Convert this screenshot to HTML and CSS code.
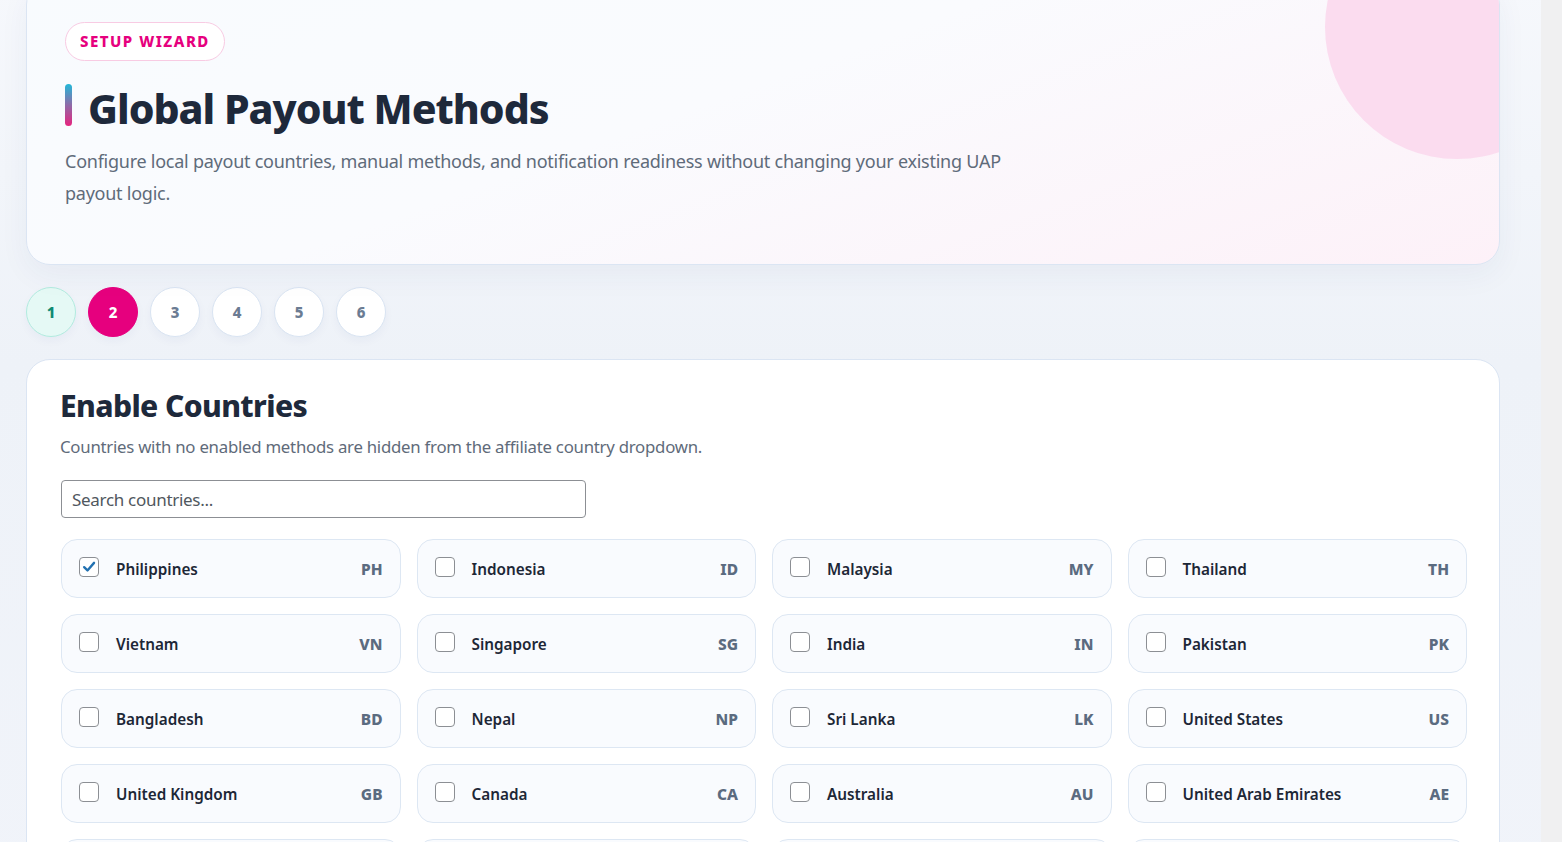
FILE: index.html
```html
<!DOCTYPE html>
<html lang="en">
<head>
<meta charset="utf-8">
<title>Global Payout Methods</title>
<link rel="stylesheet" href="styles.css">
</head>
<body>
<div class="wrap">
  <section class="hero">
    <div class="hero-circle"></div>
    <span class="badge">SETUP WIZARD</span>
    <h1 class="title"><span class="accent"></span>Global Payout Methods</h1>
    <p class="lead">Configure local payout countries, manual methods, and notification readiness without changing your existing UAP payout logic.</p>
  </section>

  <nav class="steps">
    <span class="step done">1</span>
    <span class="step active">2</span>
    <span class="step">3</span>
    <span class="step">4</span>
    <span class="step">5</span>
    <span class="step">6</span>
  </nav>

  <section class="panel">
    <h2 class="panel-title">Enable Countries</h2>
    <p class="panel-sub">Countries with no enabled methods are hidden from the affiliate country dropdown.</p>
    <input class="search" type="text" placeholder="Search countries...">
    <div class="grid">
      <label class="country"><span class="cb checked"><svg viewBox="0 0 20 20" width="20" height="20"><path d="M4.6 10.2 L8.3 13.8 L15.6 5.4" fill="none" stroke="#2271b1" stroke-width="2.6" stroke-linecap="round" stroke-linejoin="round"/></svg></span><span class="name">Philippines</span><span class="code">PH</span></label>
      <label class="country"><span class="cb"></span><span class="name">Indonesia</span><span class="code">ID</span></label>
      <label class="country"><span class="cb"></span><span class="name">Malaysia</span><span class="code">MY</span></label>
      <label class="country"><span class="cb"></span><span class="name">Thailand</span><span class="code">TH</span></label>
      <label class="country"><span class="cb"></span><span class="name">Vietnam</span><span class="code">VN</span></label>
      <label class="country"><span class="cb"></span><span class="name">Singapore</span><span class="code">SG</span></label>
      <label class="country"><span class="cb"></span><span class="name">India</span><span class="code">IN</span></label>
      <label class="country"><span class="cb"></span><span class="name">Pakistan</span><span class="code">PK</span></label>
      <label class="country"><span class="cb"></span><span class="name">Bangladesh</span><span class="code">BD</span></label>
      <label class="country"><span class="cb"></span><span class="name">Nepal</span><span class="code">NP</span></label>
      <label class="country"><span class="cb"></span><span class="name">Sri Lanka</span><span class="code">LK</span></label>
      <label class="country"><span class="cb"></span><span class="name">United States</span><span class="code">US</span></label>
      <label class="country"><span class="cb"></span><span class="name">United Kingdom</span><span class="code">GB</span></label>
      <label class="country"><span class="cb"></span><span class="name">Canada</span><span class="code">CA</span></label>
      <label class="country"><span class="cb"></span><span class="name">Australia</span><span class="code">AU</span></label>
      <label class="country"><span class="cb"></span><span class="name">United Arab Emirates</span><span class="code">AE</span></label>
      <label class="country"><span class="cb"></span><span class="name">Saudi Arabia</span><span class="code">SA</span></label>
      <label class="country"><span class="cb"></span><span class="name">Japan</span><span class="code">JP</span></label>
      <label class="country"><span class="cb"></span><span class="name">South Korea</span><span class="code">KR</span></label>
      <label class="country"><span class="cb"></span><span class="name">Germany</span><span class="code">DE</span></label>
    </div>
  </section>
</div>
</body>
</html>
```

FILE: styles.css
```css
* { box-sizing: border-box; }
html, body { margin: 0; padding: 0; }
body {
  background: #f0f0f1;
  font-family: "Noto Sans", "Open Sans", Arial, sans-serif;
  color: #1e293b;
  overflow: hidden;
  height: 842px;
}
.wrap {
  width: 1541px;
  min-height: 842px;
  padding: 0 41px 0 26px;
  background: linear-gradient(180deg, #f6f8fc 0%, #eef2f8 40%, #f1f4fa 100%);
}
.hero {
  position: relative;
  overflow: hidden;
  margin-top: -19px;
  padding: 40px 38px 55px 38px;
  border: 1px solid #dbe5f3;
  border-radius: 24px;
  background: linear-gradient(160deg, #f8fbfe 0%, #fafbfe 45%, #fdf1f8 100%);
  box-shadow: 0 10px 30px rgba(30, 60, 120, 0.05);
}
.hero-circle {
  position: absolute;
  right: -90px;
  top: -87px;
  width: 264px;
  height: 264px;
  border-radius: 50%;
  background: #fbdcef;
}
.badge {
  position: relative;
  display: inline-block;
  height: 39px;
  line-height: 37px;
  padding: 0 14px;
  border: 1px solid #f8cbe3;
  border-radius: 20px;
  background: #fff;
  color: #e6007e;
  font-size: 15px;
  font-weight: 800;
  letter-spacing: 1.5px;
}
.title {
  position: relative;
  display: flex;
  align-items: center;
  gap: 16px;
  margin: 22px 0 0 0;
  font-size: 41px;
  line-height: 50px;
  font-weight: 800;
  letter-spacing: -1px;
  color: #1e293b;
}
.accent {
  display: block;
  width: 7px;
  height: 42px;
  margin-top: -6px;
  border-radius: 4px;
  background: linear-gradient(180deg, #22b8d8 0%, #8e6aa8 50%, #e6247e 100%);
}
.lead {
  position: relative;
  margin: 12px 0 0 0;
  max-width: 980px;
  font-size: 18px;
  line-height: 32px;
  color: #5f6b7a;
  letter-spacing: -0.25px;
}
.steps {
  display: flex;
  gap: 12px;
  padding: 22px 0 22px 0;
}
.step {
  width: 50px;
  height: 50px;
  border-radius: 50%;
  display: flex;
  align-items: center;
  justify-content: center;
  background: #fff;
  border: 1px solid #d9e4f2;
  color: #6b7c93;
  font-size: 15px;
  font-weight: 800;
  box-shadow: 0 4px 10px rgba(30, 60, 120, 0.04);
}
.step.done {
  background: #e5f9f5;
  border-color: #b2ebdf;
  color: #0f8a72;
}
.step.active {
  background: #e6007e;
  border-color: #e6007e;
  color: #fff;
}
.panel {
  padding: 27px 32px 40px 33px;
  background: #fff;
  border: 1px solid #dbe5f3;
  border-radius: 24px;
}
.panel-title {
  margin: 0;
  font-size: 30px;
  line-height: 38px;
  font-weight: 800;
  letter-spacing: -0.6px;
  color: #1e293b;
}
.panel-sub {
  margin: 10px 0 0 0;
  font-size: 16.8px;
  line-height: 24px;
  color: #5f6b7a;
  letter-spacing: -0.25px;
}
.search {
  display: block;
  margin: 21px 0 0 1px;
  width: 525px;
  height: 38px;
  padding: 0 10px;
  border: 1px solid #8c8f94;
  border-radius: 4px;
  font-family: inherit;
  font-size: 17px;
  letter-spacing: -0.3px;
  color: #2c3338;
  background: #fff;
}
.search::placeholder { color: #50575e; }
.grid {
  margin: 21px 0 0 1px;
  display: grid;
  grid-template-columns: repeat(4, 1fr);
  gap: 16px;
}
.country {
  display: flex;
  align-items: center;
  height: 59px;
  padding: 0 17px 0 17px;
  border: 1px solid #dde7f3;
  border-radius: 16px;
  background: #f9fbfe;
}
.cb {
  flex: none;
  width: 20px;
  height: 20px;
  margin-top: -4px;
  border: 1px solid #8c8f94;
  border-radius: 4px;
  background: #fff;
  display: flex;
  align-items: center;
  justify-content: center;
}
.cb svg { display: block; }
.name {
  margin-left: 17px;
  flex: 1;
  font-size: 15.3px;
  font-weight: 600;
  color: #1d2736;
}
.code {
  font-size: 15.5px;
  font-weight: 800;
  color: #5b6b80;
}
```
